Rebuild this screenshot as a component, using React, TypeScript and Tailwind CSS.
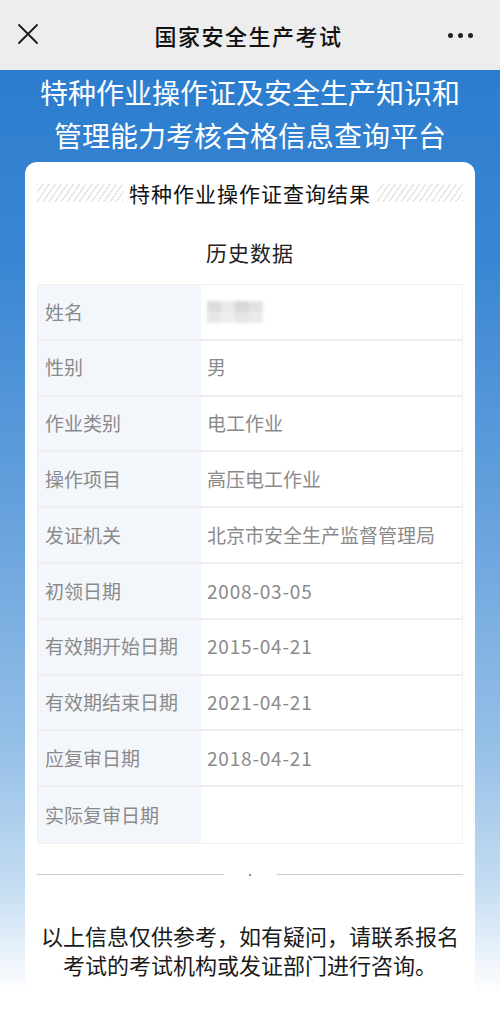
import React from "react";

const rows: [string, string][] = [
  ["姓名", ""],
  ["性别", "男"],
  ["作业类别", "电工作业"],
  ["操作项目", "高压电工作业"],
  ["发证机关", "北京市安全生产监督管理局"],
  ["初领日期", "2008-03-05"],
  ["有效期开始日期", "2015-04-21"],
  ["有效期结束日期", "2021-04-21"],
  ["应复审日期", "2018-04-21"],
  ["实际复审日期", ""],
];

function Hatch() {
  return (
    <div className="h-[18px] flex-1 bg-[repeating-linear-gradient(-55deg,#e6e6e6_0px,#e6e6e6_1.5px,transparent_1.5px,transparent_5px)]" />
  );
}

export default function App() {
  return (
    <div
      className="w-[500px] h-[1032px] overflow-hidden flex flex-col"
      style={{ fontFamily: '"Noto Sans CJK SC", "Noto Sans", sans-serif' }}
    >
      {/* top bar */}
      <div className="h-[70px] shrink-0 bg-[#ededed] flex items-center justify-between px-[17px]">
        <svg width="22" height="22" viewBox="0 0 22 22" className="mt-[-2px]">
          <path d="M2 2 L20 20 M20 2 L2 20" stroke="#1a1a1a" strokeWidth="1.8" strokeLinecap="round" />
        </svg>
        <div className="text-[22px] leading-none text-[#111] font-medium tracking-[1.5px] ml-[10px]">国家安全生产考试</div>
        <div className="flex gap-[5px] mr-[10px]">
          <span className="w-[5px] h-[5px] rounded-full bg-[#222]" />
          <span className="w-[5px] h-[5px] rounded-full bg-[#222]" />
          <span className="w-[5px] h-[5px] rounded-full bg-[#222]" />
        </div>
      </div>

      {/* body */}
      <div className="flex-1 flex flex-col bg-[linear-gradient(180deg,#2c7dcf_0%,#3a86d3_20%,#64a0dc_45%,#94bfe7_70%,#c5ddf2_85%,#ffffff_96%)]">
        <div className="pt-[1px] flex flex-col items-center text-white text-[28px] leading-[43px]">
          <div>特种作业操作证及安全生产知识和</div>
          <div>管理能力考核合格信息查询平台</div>
        </div>

        <div className="mx-[25px] mt-[5px] flex-1 bg-white rounded-t-[12px] px-[12px] pt-[19px]">
          {/* section title */}
          <div className="flex items-center gap-[6px]">
            <Hatch />
            <div className="text-[21px] leading-[24px] text-[#111] tracking-[1px]">特种作业操作证查询结果</div>
            <Hatch />
          </div>
          <div className="mt-[34px] text-center text-[21px] leading-[26px] text-[#222] tracking-[1px]">历史数据</div>

          {/* table */}
          <div className="mt-[19px] border border-[#f0f0f0]">
            {rows.map(([k, v], i) => (
              <div
                key={i}
                className={`grid grid-cols-[163px_1fr] h-[55.8px] ${i < rows.length - 1 ? "border-b-2 border-[#eeeeee]" : ""}`}
              >
                <div className="bg-[#f3f7fc] flex items-center pl-[7px] text-[19px] text-[#8a8a8a]">{k}</div>
                <div
                  className={`flex items-center pl-[6px] text-[19px] text-[#8a8a8a] ${/^\d/.test(v) ? "tracking-[0.8px]" : ""}`}
                >
                  {i === 0 ? (
                    <div className="grid grid-cols-[repeat(4,14px)] grid-rows-[repeat(2,11px)] blur-[1.5px] opacity-80">
                      <span className="bg-[#d4d4d4]" />
                      <span className="bg-[#e4e4e4]" />
                      <span className="bg-[#cfcfcf]" />
                      <span className="bg-[#dcdcdc]" />
                      <span className="bg-[#e2e2e2]" />
                      <span className="bg-[#eaeaea]" />
                      <span className="bg-[#e0e0e0]" />
                      <span className="bg-[#e6e6e6]" />
                    </div>
                  ) : (
                    v
                  )}
                </div>
              </div>
            ))}
          </div>

          {/* divider */}
          <div className="mt-[30px] flex items-center">
            <div className="flex-1 h-[1px] bg-[#cccccc]" />
            <div className="w-[53px] flex justify-center">
              <span className="w-[2px] h-[2px] rounded-full bg-[#666]" />
            </div>
            <div className="flex-1 h-[1px] bg-[#cccccc]" />
          </div>

          {/* footer */}
          <div className="mt-[45px] text-center text-[22px] leading-[29px] text-[#1a1a1a]">
            <div>以上信息仅供参考，如有疑问，请联系报名</div>
            <div>考试的考试机构或发证部门进行咨询。</div>
          </div>
        </div>
      </div>
    </div>
  );
}
